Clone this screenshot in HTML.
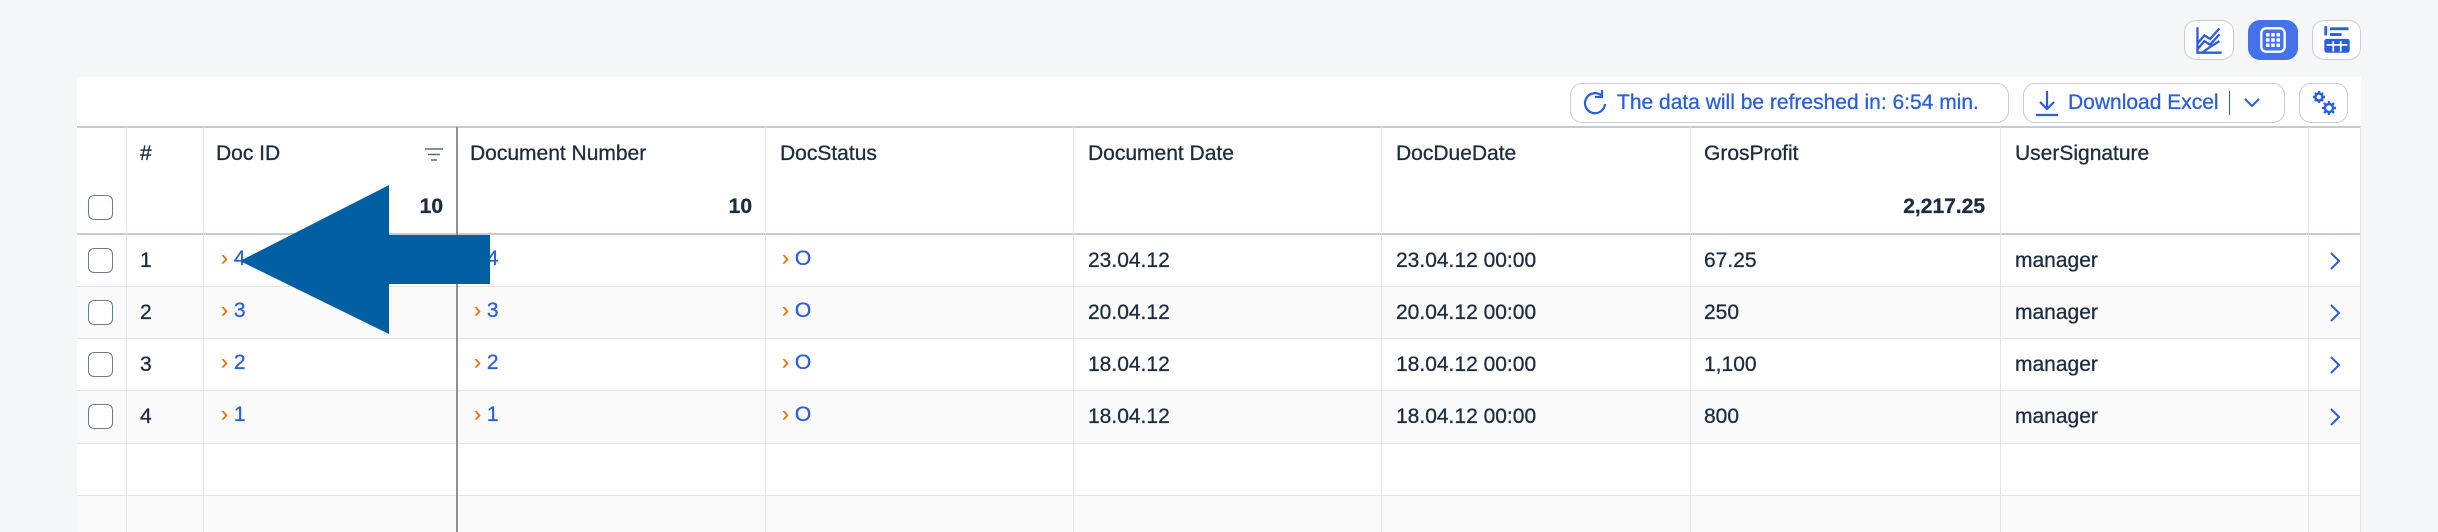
<!DOCTYPE html>
<html><head><meta charset="utf-8"><style>
*{box-sizing:border-box;margin:0;padding:0}
body{width:2438px;height:532px;background:#f5f6f7;font-family:"Liberation Sans",Arial,sans-serif;color:#1d2d3e;position:relative;overflow:hidden}
.a{position:absolute}
.btn{position:absolute;border:1.5px solid #c9ced4;border-radius:12px;background:#fff;display:flex;align-items:center;justify-content:center;color:#2b5fd9}
.t{position:absolute;font-size:21px;line-height:24px;white-space:nowrap;-webkit-text-stroke:0.3px currentColor}
.lk{color:#2f5fd7}
.ch{color:#e9730c}
.vl{position:absolute;width:1px;background:#e5e5e5;top:127px;bottom:0}
.hl{position:absolute;height:1px;background:#e5e5e5;left:77px;width:2284px}
.cb{position:absolute;left:88px;width:25px;height:25px;border:1.5px solid #6a7d90;border-radius:6px;background:#fff}
</style></head><body>
<div class="btn" style="left:2184px;top:20px;width:50px;height:40px">
<svg width="30" height="30" viewBox="0 0 26 26" fill="none" stroke="#2b5fd9" stroke-width="2"><path d="M3 2V24H24"/><path d="M3 16L9 9L14 12L22 3"/><path d="M3 21L9 14L14 17L22 8"/><path d="M7 24L14 19L22 14"/></svg></div>
<div class="btn" style="left:2248px;top:20px;width:50px;height:40px;background:#4572e8;border-color:#4572e8">
<svg width="28" height="28" viewBox="0 0 24 24"><rect x="2" y="2" width="20" height="20" rx="4" fill="none" stroke="#fff" stroke-width="2"/><g fill="#fff"><rect x="6" y="6" width="3" height="3"/><rect x="10.5" y="6" width="3" height="3"/><rect x="15" y="6" width="3" height="3"/><rect x="6" y="10.5" width="3" height="3"/><rect x="10.5" y="10.5" width="3" height="3"/><rect x="15" y="10.5" width="3" height="3"/><rect x="6" y="15" width="3" height="3"/><rect x="10.5" y="15" width="3" height="3"/><rect x="15" y="15" width="3" height="3"/></g></svg></div>
<div class="btn" style="left:2312px;top:20px;width:49px;height:40px">
<svg width="30" height="30" viewBox="0 0 26 26" fill="#2b5fd9"><rect x="2" y="1" width="2.5" height="8"/><rect x="7" y="2" width="16" height="2.5"/><rect x="7" y="7" width="10" height="2.5"/><rect x="2" y="12" width="22" height="12" rx="2"/><g fill="#fff"><rect x="4" y="16.5" width="18" height="1.5"/><rect x="9" y="14" width="1.5" height="9"/><rect x="15.5" y="14" width="1.5" height="9"/></g></svg></div>
<div class="a" style="left:77px;top:77px;width:2284px;height:455px;background:#fff"></div>
<div class="btn" style="left:1570px;top:83px;width:439px;height:40px;justify-content:flex-start;padding-left:12px;font-size:21px;-webkit-text-stroke:0.3px #2b5fd9">
<svg width="26" height="28" viewBox="0 0 26 28" fill="none" stroke="#2b5fd9" stroke-width="2.2"><path d="M19 7A10 10 0 1 0 22 15"/><path d="M19 1V8H12" /></svg><span style="margin-left:8px">The data will be refreshed in: 6:54 min.</span></div>
<div class="btn" style="left:2023px;top:83px;width:262px;height:40px;justify-content:flex-start;padding-left:10px;font-size:21px;-webkit-text-stroke:0.3px #2b5fd9">
<svg width="26" height="28" viewBox="0 0 26 28" fill="none" stroke="#2b5fd9" stroke-width="2.2"><path d="M13 2V20M6 13L13 20L20 13"/><path d="M2 26H24"/></svg><span style="margin-left:8px">Download Excel</span><span style="margin-left:10px;width:1.5px;height:24px;background:#2b5fd9"></span>
<svg style="margin-left:14px" width="16" height="10" viewBox="0 0 16 10" fill="none" stroke="#2b5fd9" stroke-width="2"><path d="M1 1L8 8L15 1"/></svg></div>
<div class="btn" style="left:2299px;top:83px;width:49px;height:40px">
<svg width="28" height="28" viewBox="0 0 28 28" fill="none" stroke="#2b5fd9" stroke-width="2.4"><circle cx="9" cy="8" r="3.5"/><path d="M9 2V4M9 12V14M3 8H5M13 8H15M5 4L6.5 5.5M13 4L11.5 5.5M5 12L6.5 10.5M13 12L11.5 10.5"/><circle cx="19" cy="19" r="4"/><path d="M19 12V14.5M19 23.5V26M12 19H14.5M23.5 19H26M14 14L16 16M24 14L22 16M14 24L16 22M24 24L22 22"/></svg></div>
<div class="a" style="left:77px;top:126px;width:2284px;height:2px;background:#c5cbd1"></div>
<div class="a" style="left:77px;top:233px;width:2284px;height:2px;background:#c5cbd1"></div>
<div class="a" style="left:77px;top:287px;width:2284px;height:51px;background:#fafafa"></div>
<div class="a" style="left:77px;top:391px;width:2284px;height:52px;background:#fafafa"></div>
<div class="a" style="left:77px;top:496px;width:2284px;height:36px;background:#fafafa"></div>
<div class="hl" style="top:286px"></div><div class="hl" style="top:338px"></div><div class="hl" style="top:390px"></div><div class="hl" style="top:443px"></div><div class="hl" style="top:495px"></div>
<div class="vl" style="left:126px"></div><div class="vl" style="left:203px"></div>
<div class="vl" style="left:456px;background:#8e9297;width:1.5px"></div>
<div class="vl" style="left:765px"></div><div class="vl" style="left:1073px"></div><div class="vl" style="left:1381px"></div><div class="vl" style="left:1690px"></div><div class="vl" style="left:2000px"></div><div class="vl" style="left:2308px"></div><div class="vl" style="left:2360px"></div>
<div class="t" style="left:140px;top:142px">#</div>
<div class="t" style="left:216px;top:142px">Doc ID</div>
<svg class="a" style="left:424px;top:148px" width="20" height="14" viewBox="0 0 20 14" stroke="#5b6b7c" stroke-width="1.6"><path d="M1 1H19M4 6.5H16M7 12H13"/></svg>
<div class="t" style="left:470px;top:142px">Document Number</div>
<div class="t" style="left:780px;top:142px">DocStatus</div>
<div class="t" style="left:1088px;top:142px">Document Date</div>
<div class="t" style="left:1396px;top:142px">DocDueDate</div>
<div class="t" style="left:1704px;top:142px">GrosProfit</div>
<div class="t" style="left:2015px;top:142px">UserSignature</div>
<div class="t" style="left:405px;top:195px;width:38px;text-align:right;font-weight:bold">10</div>
<div class="t" style="left:700px;top:195px;width:52px;text-align:right;font-weight:bold">10</div>
<div class="t" style="left:1860px;top:195px;width:125px;text-align:right;font-weight:bold">2,217.25</div>
<div class="cb" style="top:195px"></div>
<div class="cb" style="top:248px"></div><div class="cb" style="top:300px"></div><div class="cb" style="top:352px"></div><div class="cb" style="top:404px"></div>
<div class="t" style="left:140px;top:249px">1</div><div class="t" style="left:140px;top:301px">2</div><div class="t" style="left:140px;top:353px">3</div><div class="t" style="left:140px;top:405px">4</div>
<div class="t" style="left:221px;top:247px"><span class="ch">›</span> <span class="lk">4</span></div>
<div class="t" style="left:221px;top:299px"><span class="ch">›</span> <span class="lk">3</span></div>
<div class="t" style="left:221px;top:351px"><span class="ch">›</span> <span class="lk">2</span></div>
<div class="t" style="left:221px;top:403px"><span class="ch">›</span> <span class="lk">1</span></div>
<div class="t" style="left:474px;top:247px"><span class="ch">›</span> <span class="lk">4</span></div>
<div class="t" style="left:474px;top:299px"><span class="ch">›</span> <span class="lk">3</span></div>
<div class="t" style="left:474px;top:351px"><span class="ch">›</span> <span class="lk">2</span></div>
<div class="t" style="left:474px;top:403px"><span class="ch">›</span> <span class="lk">1</span></div>
<div class="t" style="left:782px;top:247px"><span class="ch">›</span> <span class="lk">O</span></div>
<div class="t" style="left:782px;top:299px"><span class="ch">›</span> <span class="lk">O</span></div>
<div class="t" style="left:782px;top:351px"><span class="ch">›</span> <span class="lk">O</span></div>
<div class="t" style="left:782px;top:403px"><span class="ch">›</span> <span class="lk">O</span></div>
<div class="t" style="left:1088px;top:249px">23.04.12</div><div class="t" style="left:1088px;top:301px">20.04.12</div><div class="t" style="left:1088px;top:353px">18.04.12</div><div class="t" style="left:1088px;top:405px">18.04.12</div>
<div class="t" style="left:1396px;top:249px">23.04.12 00:00</div><div class="t" style="left:1396px;top:301px">20.04.12 00:00</div><div class="t" style="left:1396px;top:353px">18.04.12 00:00</div><div class="t" style="left:1396px;top:405px">18.04.12 00:00</div>
<div class="t" style="left:1704px;top:249px">67.25</div><div class="t" style="left:1704px;top:301px">250</div><div class="t" style="left:1704px;top:353px">1,100</div><div class="t" style="left:1704px;top:405px">800</div>
<div class="t" style="left:2015px;top:249px">manager</div><div class="t" style="left:2015px;top:301px">manager</div><div class="t" style="left:2015px;top:353px">manager</div><div class="t" style="left:2015px;top:405px">manager</div>
<svg class="a" style="left:2329px;top:252px" width="12" height="18" viewBox="0 0 12 18" fill="none" stroke="#2b5fd9" stroke-width="2"><path d="M2 1L10 9L2 17"/></svg>
<svg class="a" style="left:2329px;top:304px" width="12" height="18" viewBox="0 0 12 18" fill="none" stroke="#2b5fd9" stroke-width="2"><path d="M2 1L10 9L2 17"/></svg>
<svg class="a" style="left:2329px;top:356px" width="12" height="18" viewBox="0 0 12 18" fill="none" stroke="#2b5fd9" stroke-width="2"><path d="M2 1L10 9L2 17"/></svg>
<svg class="a" style="left:2329px;top:408px" width="12" height="18" viewBox="0 0 12 18" fill="none" stroke="#2b5fd9" stroke-width="2"><path d="M2 1L10 9L2 17"/></svg>
<svg class="a" style="left:0;top:0" width="2438" height="532"><polygon points="240,261 389,185 389,235 490,235 490,284 389,284 389,334" fill="#005fa3"/></svg>
</body></html>
